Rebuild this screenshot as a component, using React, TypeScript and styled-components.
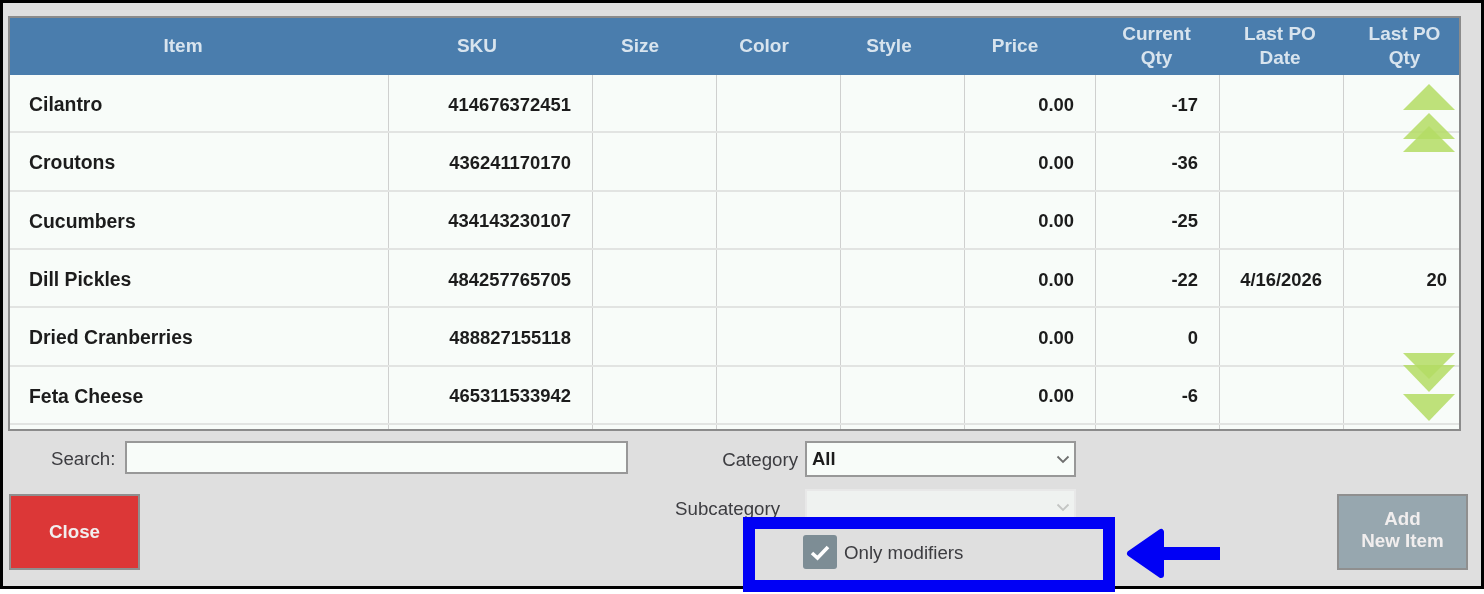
import React from "react";
import styled, { createGlobalStyle } from "styled-components";

const GlobalStyle = createGlobalStyle`
  html, body {
    margin: 0;
    padding: 0;
    background: #fff;
    font-family: "Liberation Sans", Arial, sans-serif;
  }
`;

const COLUMNS = "379px 204px 124px 124px 124px 131px 124px 124px 118px";

const Page = styled.div`
  position: relative;
  width: 1484px;
  height: 594px;
  overflow: hidden;
`;

const Frame = styled.div`
  box-sizing: border-box;
  width: 1484px;
  height: 589px;
  border: 3px solid #000;
  background: #dfdfdf;
  padding: 13px 20px 0 5px;
  filter: blur(0.6px);
`;

const GridBox = styled.div`
  position: relative;
  box-sizing: border-box;
  width: 1453px;
  height: 415px;
  border: 2px solid #8b8b8b;
  background: #f8fcf9;
  overflow: hidden;
`;

const HeaderRow = styled.div`
  display: grid;
  grid-template-columns: ${COLUMNS};
  height: 58px;
  background: #4a7dad;
  margin-top: -1px;
`;

const HeaderCell = styled.div<{ $shift?: number; $lead?: number }>`
  display: flex;
  align-items: center;
  justify-content: center;
  text-align: center;
  padding-right: ${(p) => p.$shift ?? 0}px;
  padding-left: ${(p) => p.$lead ?? 0}px;
  color: #d8e4ee;
  font-size: 19px;
  font-weight: 700;
  line-height: 24px;
`;

const Row = styled.div`
  display: grid;
  grid-template-columns: ${COLUMNS};
  height: 58.33px;
  box-sizing: border-box;
  border-bottom: 2px solid #e2e4e2;
`;

const Cell = styled.div<{ $name?: boolean }>`
  box-sizing: border-box;
  display: flex;
  align-items: center;
  justify-content: ${(p) => (p.$name ? "flex-start" : "flex-end")};
  padding: ${(p) => (p.$name ? "3px 0 0 19px" : "3px 21px 0 0")};
  border-right: 1px solid #cfd0cf;
  color: #1c1c1c;
  font-size: ${(p) => (p.$name ? "19.4px" : "18.4px")};
  font-weight: 700;

  &:last-child {
    border-right: none;
    padding-right: 15px;
  }
`;

const Filler = styled.div`
  display: grid;
  grid-template-columns: ${COLUMNS};
  height: 8px;

  & > div {
    border-right: 1px solid #cfd0cf;
  }
  & > div:last-child {
    border-right: none;
  }
`;

const ScrollArrows = styled.svg`
  position: absolute;
  right: 3px;
  top: 66px;
`;

const Footer = styled.div`
  display: grid;
  grid-template-columns: 797px 271px 1fr;
  height: 140px;
  margin-top: 10px;
`;

const LeftPart = styled.div`
  display: flex;
  flex-direction: column;
  padding-left: 1px;
`;

const SearchRow = styled.div`
  display: flex;
  align-items: center;
  height: 33px;
  margin-bottom: 20px;
  padding-left: 42px;
  gap: 10px;
`;

const FieldLabel = styled.label`
  color: #3c3c40;
  font-size: 18.7px;
  white-space: nowrap;
`;

const SearchLabel = styled(FieldLabel)`
  margin-top: 3px;
`;

const CheckLabel = styled(FieldLabel)`
  padding-top: 2px;
`;

const SearchInput = styled.div`
  box-sizing: border-box;
  width: 503px;
  height: 33px;
  background: #f8fcf9;
  border: 2px solid #989898;
`;

const ActionButton = styled.button<{ $bg: string; $lift?: number }>`
  box-sizing: border-box;
  width: 131px;
  height: 76px;
  padding: 0 0 ${(p) => p.$lift ?? 0}px;
  background: ${(p) => p.$bg};
  border: 2px solid #8f8f8f;
  color: #f1eeee;
  font-family: inherit;
  font-size: 18.8px;
  font-weight: 700;
  line-height: 22px;
`;

const MiddlePart = styled.div`
  display: flex;
  flex-direction: column;
  position: relative;
`;

const SelectRow = styled.div`
  position: relative;
  height: 36px;
  margin-bottom: 12px;
`;

const SideLabel = styled(FieldLabel)`
  position: absolute;
  right: 278px;
  top: 19px;
  transform: translateY(-50%);
`;

const SubLabel = styled(SideLabel)`
  right: 296px;
  top: 20px;
`;

const SelectBox = styled.div<{ $disabled?: boolean }>`
  box-sizing: border-box;
  display: flex;
  align-items: center;
  justify-content: space-between;
  width: 271px;
  height: 36px;
  padding: 0 4px 0 5px;
  background: ${(p) => (p.$disabled ? "#eff2f0" : "#f8fcf9")};
  border: 2px solid ${(p) => (p.$disabled ? "#e8e8e8" : "#989898")};
  color: #1c1c1c;
  font-size: 18.4px;
  font-weight: 700;
`;

const CheckRow = styled.div`
  display: flex;
  align-items: center;
  gap: 7px;
  margin-left: -2px;
  margin-top: -2px;
`;

const CheckBox = styled.span`
  display: flex;
  align-items: center;
  justify-content: center;
  width: 34px;
  height: 34px;
  border-radius: 3px;
  background: #7d8d95;
`;

const RightPart = styled.div`
  display: flex;
  justify-content: flex-end;
  align-items: flex-start;
  padding-top: 53px;
  margin-right: -7px;
`;

const Highlight = styled.div`
  position: absolute;
  left: 743px;
  top: 517px;
  box-sizing: border-box;
  width: 372px;
  height: 75px;
  border: 12px solid #0000f5;
`;

const Pointer = styled.svg`
  position: absolute;
  left: 1124px;
  top: 526px;
`;

const headers: { label: React.ReactNode; shift?: number; lead?: number }[] = [
  { label: "Item", shift: 33 },
  { label: "SKU", shift: 28 },
  { label: "Size", shift: 30 },
  { label: "Color", shift: 30 },
  { label: "Style", shift: 28 },
  { label: "Price", shift: 31 },
  { label: <>Current<br />Qty</>, shift: 3 },
  { label: <>Last PO<br />Date</>, shift: 4 },
  { label: <>Last PO<br />Qty</>, lead: 3 },
];

const rows = [
  { item: "Cilantro", sku: "414676372451", qty: "-17", date: "", last: "" },
  { item: "Croutons", sku: "436241170170", qty: "-36", date: "", last: "" },
  { item: "Cucumbers", sku: "434143230107", qty: "-25", date: "", last: "" },
  { item: "Dill Pickles", sku: "484257765705", qty: "-22", date: "4/16/2026", last: "20" },
  { item: "Dried Cranberries", sku: "488827155118", qty: "0", date: "", last: "" },
  { item: "Feta Cheese", sku: "465311533942", qty: "-6", date: "", last: "" },
];

function Chevron({ color }: { color: string }) {
  return (
    <svg width="14" height="9" viewBox="0 0 14 9" fill="none">
      <path d="M1.500 1.500 7 7l5.500-5.500" stroke={color} strokeWidth="1.8" />
    </svg>
  );
}

export default function App() {
  return (
    <Page>
      <GlobalStyle />
      <Frame>
        <GridBox>
          <HeaderRow>
            {headers.map((h, i) => (
              <HeaderCell key={i} $shift={h.shift} $lead={h.lead}>
                <span>{h.label}</span>
              </HeaderCell>
            ))}
          </HeaderRow>
          {rows.map((r) => (
            <Row key={r.sku}>
              <Cell $name>{r.item}</Cell>
              <Cell>{r.sku}</Cell>
              <Cell />
              <Cell />
              <Cell />
              <Cell>0.00</Cell>
              <Cell>{r.qty}</Cell>
              <Cell>{r.date}</Cell>
              <Cell>{r.last}</Cell>
            </Row>
          ))}
          <Filler>
            {headers.map((_, i) => (
              <div key={i} />
            ))}
          </Filler>
          <ScrollArrows width="54" height="339" viewBox="0 0 54 339">
            <g fill="#b4dc64" fillOpacity="0.85">
              <path d="M27 0 53 26H1z" />
              <path d="M27 29 53 55H1z" />
              <path d="M27 42 53 68H1z" />
              <path d="M1 269H53L27 295z" />
              <path d="M1 281H53L27 308z" />
              <path d="M1 310H53L27 337z" />
            </g>
          </ScrollArrows>
        </GridBox>
        <Footer>
          <LeftPart>
            <SearchRow>
              <SearchLabel>Search:</SearchLabel>
              <SearchInput />
            </SearchRow>
            <ActionButton $bg="#dc3737">Close</ActionButton>
          </LeftPart>
          <MiddlePart>
            <SelectRow>
              <SideLabel>Category</SideLabel>
              <SelectBox>
                All
                <Chevron color="#6f6f6f" />
              </SelectBox>
            </SelectRow>
            <SelectRow>
              <SubLabel>Subcategory</SubLabel>
              <SelectBox $disabled>
                <span />
                <Chevron color="#c4c6c4" />
              </SelectBox>
            </SelectRow>
            <CheckRow>
              <CheckBox>
                <svg width="20" height="17" viewBox="0 0 20 17" fill="none">
                  <path d="M2 9 7.500 14 18 3" stroke="#fff" strokeWidth="3.600" />
                </svg>
              </CheckBox>
              <CheckLabel>Only modifiers</CheckLabel>
            </CheckRow>
          </MiddlePart>
          <RightPart>
            <ActionButton $bg="#97a7af" $lift={4}>
              Add
              <br />
              New Item
            </ActionButton>
          </RightPart>
        </Footer>
      </Frame>
      <Highlight />
      <Pointer width="98" height="56" viewBox="0 0 98 56">
        <path d="M6 27.500 37 6V49Z" fill="#0000f5" stroke="#0000f5" strokeLinejoin="round" strokeWidth="6" />
        <rect x="38" y="21" width="58" height="13" fill="#0000f5" />
      </Pointer>
    </Page>
  );
}
